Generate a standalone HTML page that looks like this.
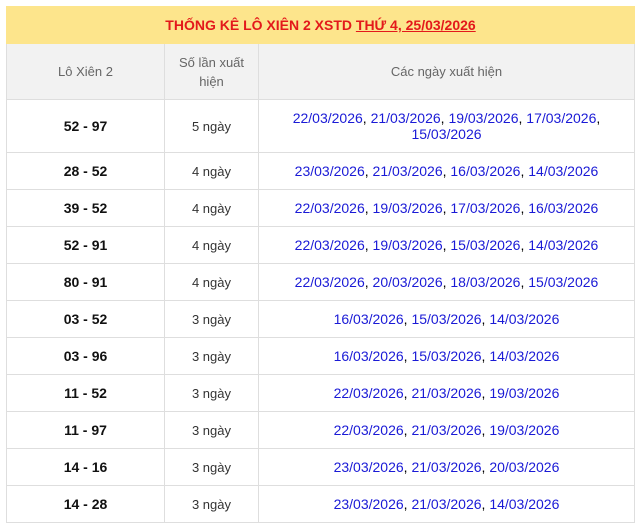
<!DOCTYPE html>
<html><head><meta charset="utf-8"><style>
html,body{margin:0;padding:0;background:#fff;width:636px;height:526px;overflow:hidden}
body{font-family:"Liberation Sans",Arial,sans-serif}
table{position:absolute;left:6px;top:6px;border-collapse:collapse;table-layout:fixed;width:629px}
td,th{border:1px solid #dedede;text-align:center;padding:0 4px;vertical-align:middle}
.title{background:#fde58c;height:36px;color:#e3191b;font-weight:bold;font-size:14px;border-color:#fde58c}
.title u{text-decoration:underline}
th{background:#f2f2f2;font-weight:normal;color:#666;font-size:13px;height:55px;line-height:19px}
td{height:36px;font-size:13px;color:#333}
td.a{font-weight:bold;font-size:14px;color:#111}
td.d{font-size:14px;color:#000;line-height:16px}
td.d span{color:#1a1ad6}
tr.r1 td{height:52px}
</style></head><body>
<table>
<colgroup><col style="width:158px"><col style="width:94px"><col></colgroup>
<tr><td colspan="3" class="title">THỐNG KÊ LÔ XIÊN 2 XSTD <u>THỨ 4, 25/03/2026</u></td></tr>
<tr><th>Lô Xiên 2</th><th>Số lần xuất<br>hiện</th><th>Các ngày xuất hiện</th></tr>
<tr class="r1"><td class="a">52 - 97</td><td>5 ngày</td><td class="d"><span>22/03/2026</span>, <span>21/03/2026</span>, <span>19/03/2026</span>, <span>17/03/2026</span>,<br><span>15/03/2026</span></td></tr>
<tr><td class="a">28 - 52</td><td>4 ngày</td><td class="d"><span>23/03/2026</span>, <span>21/03/2026</span>, <span>16/03/2026</span>, <span>14/03/2026</span></td></tr>
<tr><td class="a">39 - 52</td><td>4 ngày</td><td class="d"><span>22/03/2026</span>, <span>19/03/2026</span>, <span>17/03/2026</span>, <span>16/03/2026</span></td></tr>
<tr><td class="a">52 - 91</td><td>4 ngày</td><td class="d"><span>22/03/2026</span>, <span>19/03/2026</span>, <span>15/03/2026</span>, <span>14/03/2026</span></td></tr>
<tr><td class="a">80 - 91</td><td>4 ngày</td><td class="d"><span>22/03/2026</span>, <span>20/03/2026</span>, <span>18/03/2026</span>, <span>15/03/2026</span></td></tr>
<tr><td class="a">03 - 52</td><td>3 ngày</td><td class="d"><span>16/03/2026</span>, <span>15/03/2026</span>, <span>14/03/2026</span></td></tr>
<tr><td class="a">03 - 96</td><td>3 ngày</td><td class="d"><span>16/03/2026</span>, <span>15/03/2026</span>, <span>14/03/2026</span></td></tr>
<tr><td class="a">11 - 52</td><td>3 ngày</td><td class="d"><span>22/03/2026</span>, <span>21/03/2026</span>, <span>19/03/2026</span></td></tr>
<tr><td class="a">11 - 97</td><td>3 ngày</td><td class="d"><span>22/03/2026</span>, <span>21/03/2026</span>, <span>19/03/2026</span></td></tr>
<tr><td class="a">14 - 16</td><td>3 ngày</td><td class="d"><span>23/03/2026</span>, <span>21/03/2026</span>, <span>20/03/2026</span></td></tr>
<tr><td class="a">14 - 28</td><td>3 ngày</td><td class="d"><span>23/03/2026</span>, <span>21/03/2026</span>, <span>14/03/2026</span></td></tr>
</table>
</body></html>
